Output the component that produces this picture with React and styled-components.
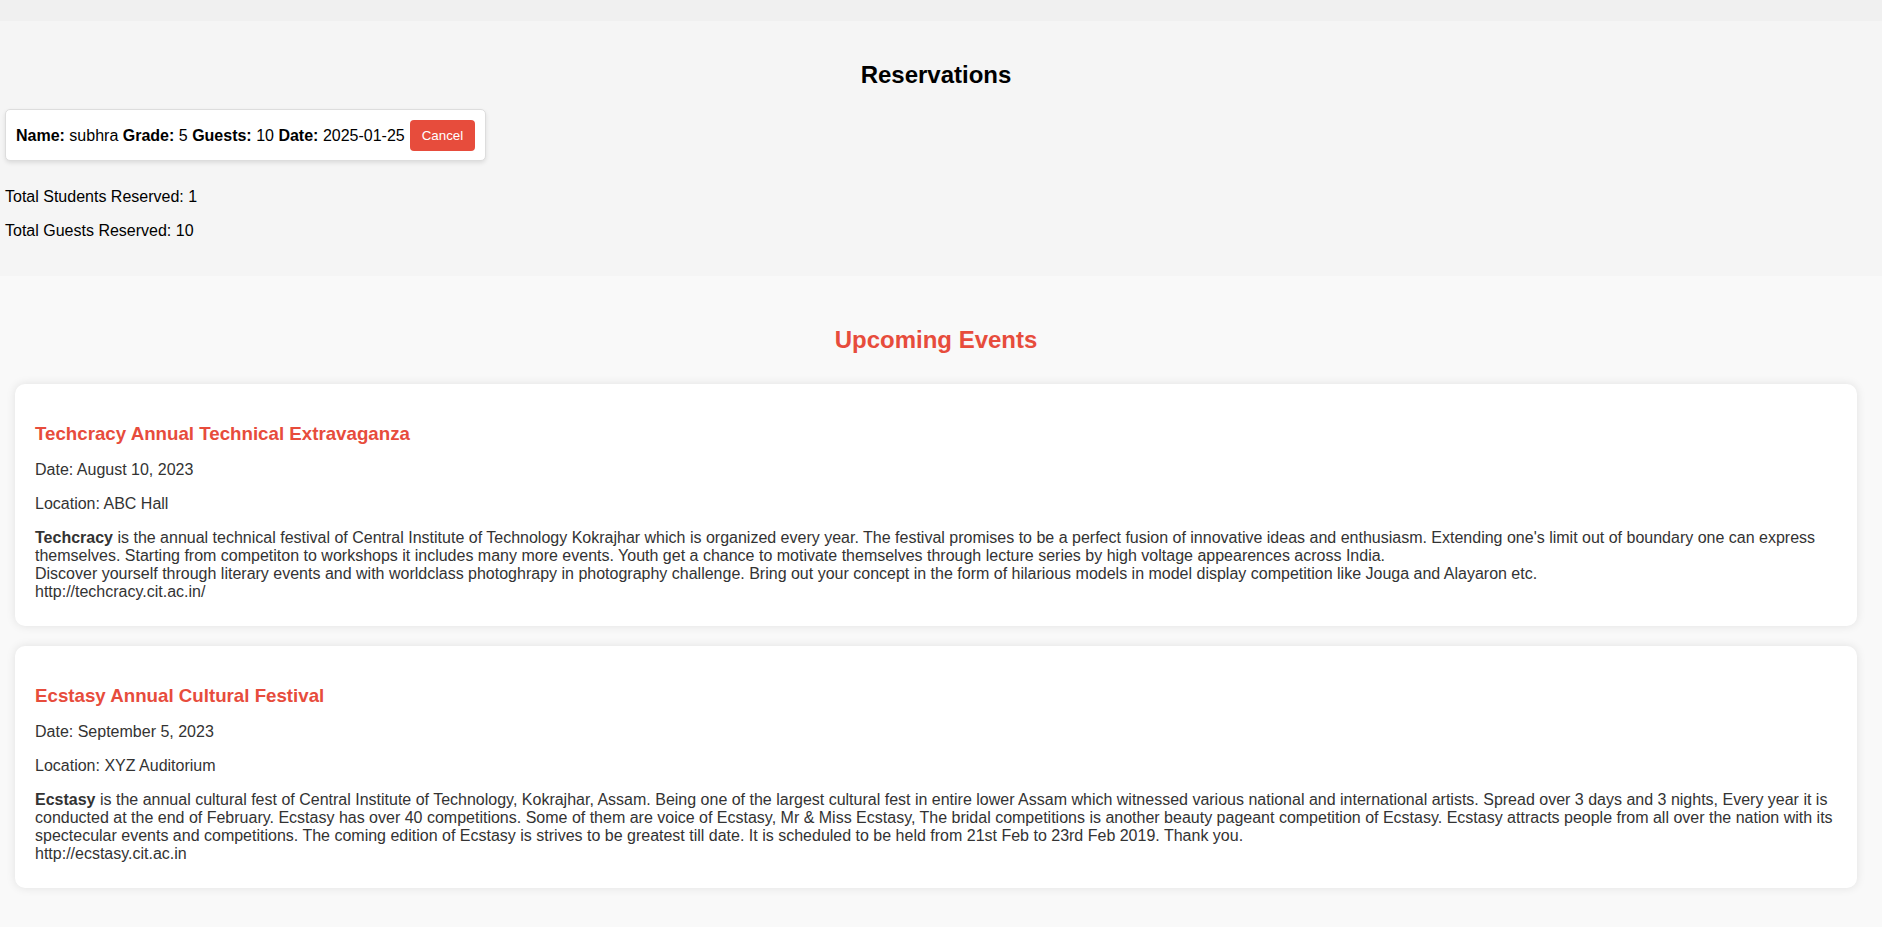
import React from 'react';
import styled, { createGlobalStyle } from 'styled-components';

const GlobalStyle = createGlobalStyle`
  body {
    margin: 0;
    background-color: #f9f9f9;
    font-family: "Liberation Sans", Arial, sans-serif;
  }
`;

const TopBar = styled.div`
  height: 21px;
  background-color: #f0f0f0;
`;

const ReservationSection = styled.section`
  background-color: #f5f5f5;
  padding: 20px 15px 20px 5px;
  color: #000;
`;

const SectionTitle = styled.h2`
  text-align: center;
  font-size: 24px;
  margin: 19.92px 0 ${(props) => props.gapBelow || '20.5px'};
  color: ${(props) => props.color || '#000'};
`;

const ReservationList = styled.div`
  display: flex;
  flex-direction: column;
  align-items: flex-start;
  margin-bottom: 27px;
`;

const ReservationCard = styled.div`
  display: flex;
  align-items: center;
  gap: 5px;
  background-color: #fff;
  border: 1px solid #ddd;
  border-radius: 5px;
  padding: 10px 10px 9px 10px;
  box-shadow: 0 2px 4px rgba(0, 0, 0, 0.1);
  font-size: 16px;
`;

const CancelButton = styled.button`
  background-color: #e74c3c;
  color: #fff;
  border: none;
  border-radius: 4px;
  padding: 8px 12px;
  font-family: "Liberation Sans", Arial, sans-serif;
  font-size: 13.33px;
  cursor: pointer;
`;

const TotalLine = styled.p`
  margin: 16px 0;
  font-size: 16px;
`;

const EventsSection = styled.section`
  padding: 30px 15px 20px 5px;
`;

const EventList = styled.div`
  display: flex;
  flex-direction: column;
`;

const EventCard = styled.div`
  background-color: #fff;
  margin: 10px;
  padding: 20px 20px 25px;
  border-radius: 10px;
  box-shadow: 0 0 10px rgba(0, 0, 0, 0.1);
  color: #333;
`;

const EventTitle = styled.h3`
  color: #e74c3c;
  font-size: 18.72px;
  margin: 18.72px 0 16px;
`;

const EventInfo = styled.p`
  margin: 16px 0;
  font-size: 16px;
`;

const EventDescription = styled.p`
  margin: 16px 0 0;
  font-size: 16px;
  white-space: pre-line;
`;

const events = [
  {
    title: 'Techcracy Annual Technical Extravaganza',
    date: 'August 10, 2023',
    location: 'ABC Hall',
    name: 'Techcracy',
    text:
      " is the annual technical festival of Central Institute of Technology Kokrajhar which is organized every year. The festival promises to be a perfect fusion of innovative ideas and enthusiasm. Extending one's limit out of boundary one can express themselves. Starting from competiton to workshops it includes many more events. Youth get a chance to motivate themselves through lecture series by high voltage appearences across India.\nDiscover yourself through literary events and with worldclass photoghrapy in photography challenge. Bring out your concept in the form of hilarious models in model display competition like Jouga and Alayaron etc.\nhttp://techcracy.cit.ac.in/",
  },
  {
    title: 'Ecstasy Annual Cultural Festival',
    date: 'September 5, 2023',
    location: 'XYZ Auditorium',
    name: 'Ecstasy',
    text:
      ' is the annual cultural fest of Central Institute of Technology, Kokrajhar, Assam. Being one of the largest cultural fest in entire lower Assam which witnessed various national and international artists. Spread over 3 days and 3 nights, Every year it is conducted at the end of February. Ecstasy has over 40 competitions. Some of them are voice of Ecstasy, Mr & Miss Ecstasy, The bridal competitions is another beauty pageant competition of Ecstasy. Ecstasy attracts people from all over the nation with its spectecular events and competitions. The coming edition of Ecstasy is strives to be greatest till date. It is scheduled to be held from 21st Feb to 23rd Feb 2019. Thank you.\nhttp://ecstasy.cit.ac.in',
  },
];

const reservations = [
  { name: 'subhra', grade: 5, guests: 10, date: '2025-01-25' },
];

const App = () => {
  const totalGuests = reservations.reduce((sum, r) => sum + r.guests, 0);
  return (
    <>
      <GlobalStyle />
      <TopBar />
      <ReservationSection>
        <SectionTitle>Reservations</SectionTitle>
        <ReservationList>
          {reservations.map((r, i) => (
            <ReservationCard key={i}>
              <span>
                <strong>Name:</strong> {r.name} <strong>Grade:</strong> {r.grade}{' '}
                <strong>Guests:</strong> {r.guests} <strong>Date:</strong> {r.date}
              </span>
              <CancelButton>Cancel</CancelButton>
            </ReservationCard>
          ))}
        </ReservationList>
        <TotalLine>Total Students Reserved: {reservations.length}</TotalLine>
        <TotalLine>Total Guests Reserved: {totalGuests}</TotalLine>
      </ReservationSection>
      <EventsSection>
        <SectionTitle color="#e74c3c" gapBelow="20px">Upcoming Events</SectionTitle>
        <EventList>
          {events.map((ev) => (
            <EventCard key={ev.title}>
              <EventTitle>{ev.title}</EventTitle>
              <EventInfo>Date: {ev.date}</EventInfo>
              <EventInfo>Location: {ev.location}</EventInfo>
              <EventDescription>
                <strong>{ev.name}</strong>
                {ev.text}
              </EventDescription>
            </EventCard>
          ))}
        </EventList>
      </EventsSection>
    </>
  );
};

export default App;
